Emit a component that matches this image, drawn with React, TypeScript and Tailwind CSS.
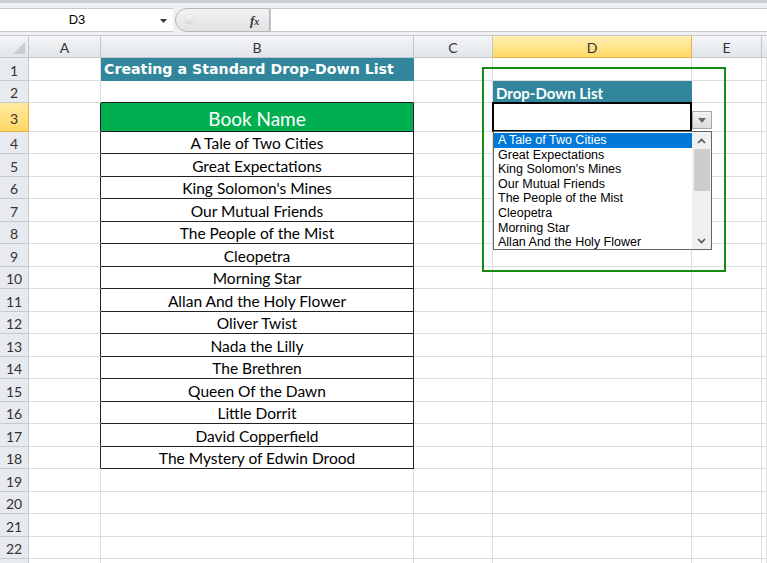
import React from "react";

const books = [
  "A Tale of Two Cities",
  "Great Expectations",
  "King Solomon's Mines",
  "Our Mutual Friends",
  "The People of the Mist",
  "Cleopetra",
  "Morning Star",
  "Allan And the Holy Flower",
  "Oliver Twist",
  "Nada the Lilly",
  "The Brethren",
  "Queen Of the Dawn",
  "Little Dorrit",
  "David Copperfield",
  "The Mystery of Edwin Drood",
];

const rowHeights: Record<number, string> = { 1: "h-[23px]", 2: "h-[22px]", 3: "h-[29px]" };
const heightOf = (r: number) => rowHeights[r] ?? (r % 2 === 0 ? "h-[22px]" : "h-[23px]");

const grid = "border-r border-b border-[#dadcdd]";

const FormulaBar = () => (
  <div className="h-[36px] flex flex-col">
    <div className="h-[3px] bg-[#cbd0d6]" />
    <div className="flex-1 flex items-start pt-[5px] bg-[#eef0f2] border-b border-[#c5c9ce]">
      <div className="w-[173px] h-[24px] bg-white border-y border-[#c6c9cd] flex items-center relative">
        <span className="w-[154px] text-center text-[13px] text-black font-['Liberation_Sans',sans-serif]">D3</span>
        <svg width="7" height="4" viewBox="0 0 7 4" className="absolute left-[160px] top-[10px]">
          <polygon points="0,0 7,0 3.5,4" fill="#333" />
        </svg>
      </div>
      <div className="ml-[2px] w-[95px] h-[24px] rounded-l-full border border-[#b3b6ba] bg-linear-to-b from-[#f2f2f2] to-[#e2e2e2] relative">
        <div className="absolute left-[8px] top-[5px] w-[11px] h-[11px] rounded-full bg-linear-to-b from-[#fafafa] to-[#d8d8d8] border border-[#e0e0e0]" />
        <span className="absolute left-[74px] top-[2px] text-[13px] italic font-bold text-[#333] font-['Liberation_Serif',serif]">
          f<span className="text-[10px]">x</span>
        </span>
      </div>
      <div className="flex-1 h-[24px] bg-white border-y border-l border-[#c6c9cd]" />
    </div>
  </div>
);

const HeaderCell = ({ label, w, active }: { label: string; w: string; active?: boolean }) => (
  <div
    className={`${w} h-full flex items-center justify-center pt-[1px] text-[14px] border-r border-b ${
      active
        ? "bg-linear-to-b from-[#fff0b3] to-[#ffd862] border-[#e8b04a] text-[#333]"
        : "bg-linear-to-b from-[#f3f5f7] to-[#e2e5e9] border-[#c3c7cc] text-[#333]"
    }`}
  >
    {label}
  </div>
);

const Chevron = ({ up }: { up?: boolean }) => (
  <svg width="9" height="6" viewBox="0 0 9 6">
    <polyline
      points={up ? "1,5 4.5,1.5 8,5" : "1,1 4.5,4.5 8,1"}
      fill="none"
      stroke="#555"
      strokeWidth="1.6"
    />
  </svg>
);

const DropList = () => (
  <div className="absolute left-0 top-full w-[219px] h-[119px] bg-white border border-[#646464] z-20 flex font-['Liberation_Sans',sans-serif] text-[12.5px]">
    <div className="flex-1 pt-[1px]">
      {books.slice(0, 8).map((b, i) => (
        <div
          key={b}
          className={`h-[14.6px] leading-[15.6px] pl-[4px] whitespace-nowrap ${
            i === 0 ? "bg-[#0078d7] text-white" : "text-black"
          }`}
        >
          {b}
        </div>
      ))}
    </div>
    <div className="w-[19px] bg-[#f0f0f0] flex flex-col items-center">
      <div className="h-[17px] flex items-center justify-center">
        <Chevron up />
      </div>
      <div className="w-[16px] h-[42px] bg-[#cdcdcd]" />
      <div className="flex-1" />
      <div className="h-[17px] flex items-center justify-center">
        <Chevron />
      </div>
    </div>
  </div>
);

const Row = ({ r }: { r: number }) => {
  const inTable = r >= 3 && r <= 18;
  const active = r === 3;
  let bCell: React.ReactNode = null;
  let bClass = `w-[313px] ${grid} bg-white`;
  if (r === 1) {
    bClass = "w-[313px] border-r border-b border-[#31869b] bg-[#31869b]";
    bCell = (
      <span className="pl-[3px] pt-[2px] text-white font-bold text-[14.2px] font-['DejaVu_Sans',sans-serif]">
        Creating a Standard Drop-Down List
      </span>
    );
  } else if (r === 2) {
    bClass = "w-[313px] border-r border-b border-[#dadcdd] border-b-[#222] bg-white";
  } else if (r === 3) {
    bClass = "w-[313px] border-r border-b border-[#222] bg-[#00b050] justify-center";
    bCell = <span className="pt-[5px] text-white text-[19px] font-['Lato',sans-serif]">Book Name</span>;
  } else if (inTable) {
    bClass = "w-[313px] border-r border-b border-[#222] bg-white justify-center";
    bCell = <span className="pt-[3px] text-black text-[15.5px] font-['Lato',sans-serif]">{books[r - 4]}</span>;
  }

  let dCell: React.ReactNode = null;
  let dClass = `w-[199px] ${grid} bg-white`;
  if (r === 2) {
    dClass = "w-[199px] border-r border-b border-[#31869b] border-b-[#b5614b] bg-[#31869b]";
    dCell = (
      <span className="pl-[3px] pt-[3px] text-white font-bold text-[15px] font-['Lato',sans-serif]">Drop-Down List</span>
    );
  } else if (r === 3) {
    dClass = `w-[199px] ${grid} bg-white relative`;
    dCell = (
      <>
        <div className="absolute -left-px -top-px -right-px -bottom-px border-2 border-black z-10" />
        <div className="absolute left-[199px] top-[8px] w-[20px] h-[18px] bg-linear-to-b from-[#f3f3f3] to-[#dcdcdc] border border-[#a7a7a7] flex items-center justify-center z-10">
          <svg width="8" height="5" viewBox="0 0 8 5">
            <polygon points="0,0 8,0 4,5" fill="#666" />
          </svg>
        </div>
        <DropList />
      </>
    );
  }

  return (
    <div className={`flex ${heightOf(r)}`}>
      <div
        className={`w-[29px] shrink-0 flex items-center justify-center pt-[2px] text-[14px] border-r border-b ${
          active
            ? "bg-linear-to-b from-[#ffeaa0] to-[#ffd862] border-[#e8b04a] text-[#333]"
            : "bg-[#e7eaee] border-[#c6cace] text-[#333]"
        }`}
      >
        {r <= 22 ? r : ""}
      </div>
      <div className={`w-[72px] shrink-0 ${grid} ${inTable ? "border-r-[#222]" : ""} bg-white`} />
      <div className={`${bClass} shrink-0 flex items-center`}>{bCell}</div>
      <div className={`w-[79px] shrink-0 ${grid} bg-white`} />
      <div className={`${dClass} shrink-0 flex items-center`}>{dCell}</div>
      <div className={`w-[70px] shrink-0 ${grid} bg-white`} />
      <div className={`flex-1 ${grid} bg-white`} />
    </div>
  );
};

export default function App() {
  const rows = Array.from({ length: 23 }, (_, i) => i + 1);
  return (
    <div className="w-[767px] h-[563px] overflow-hidden bg-white relative font-['Lato',sans-serif]">
      <FormulaBar />
      <div className="flex h-[22px]">
        <div className="w-[29px] shrink-0 h-full bg-linear-to-b from-[#f3f5f7] to-[#e2e5e9] border-r border-b border-[#c3c7cc] relative">
          <svg width="12" height="12" viewBox="0 0 12 12" className="absolute right-[3px] bottom-[3px]">
            <polygon points="12,0 12,12 0,12" fill="#c9ced4" />
          </svg>
        </div>
        <HeaderCell label="A" w="w-[72px]" />
        <HeaderCell label="B" w="w-[313px]" />
        <HeaderCell label="C" w="w-[79px]" />
        <HeaderCell label="D" w="w-[199px]" active />
        <HeaderCell label="E" w="w-[70px]" />
        <div className="flex-1 h-full bg-linear-to-b from-[#f3f5f7] to-[#e2e5e9] border-b border-[#c3c7cc]" />
      </div>
      {rows.map((r) => (
        <Row key={r} r={r} />
      ))}
      <div className="absolute left-[482px] top-[67px] w-[244px] h-[205px] border-2 border-[#168c16] z-30 pointer-events-none" />
    </div>
  );
}
